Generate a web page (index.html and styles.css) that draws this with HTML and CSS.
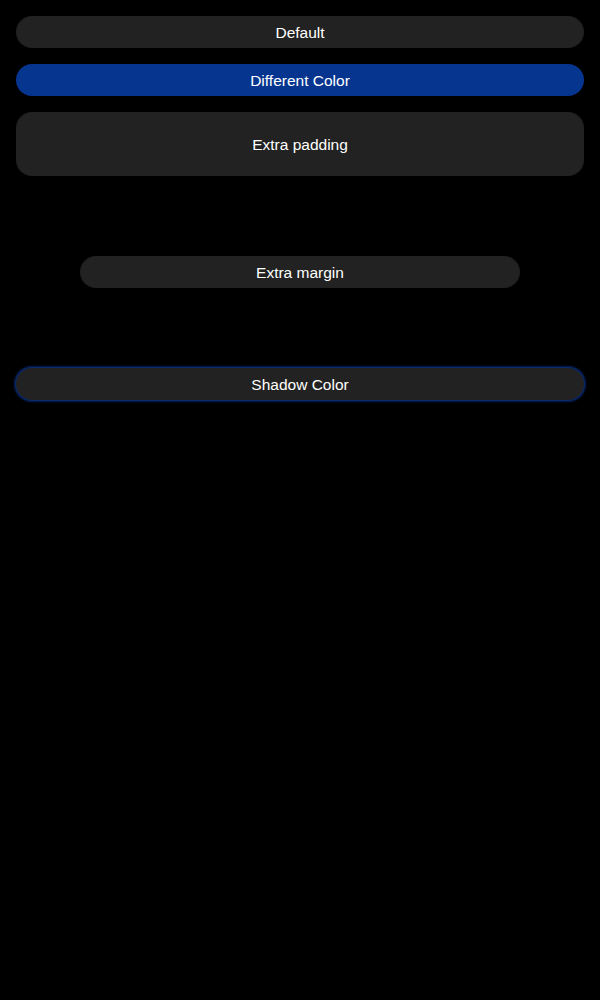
FILE: index.html
```html
<!DOCTYPE html>
<html>
<head>
<meta charset="utf-8">
<link rel="stylesheet" href="styles.css">
</head>
<body>
<div class="list">
  <button class="btn">Default</button>
  <button class="btn btn-blue">Different Color</button>
  <button class="btn btn-pad">Extra padding</button>
  <button class="btn btn-margin">Extra margin</button>
  <button class="btn btn-shadow">Shadow Color</button>
</div>
</body>
</html>
```
FILE: styles.css
```css
html, body {
  margin: 0;
  padding: 0;
  background: #000;
}
body {
  width: 600px;
  height: 1000px;
  font-family: "Liberation Sans", Arial, sans-serif;
}
.list {
  display: flex;
  flex-direction: column;
  gap: 16px;
  padding: 16px;
}
.btn {
  display: flex;
  align-items: center;
  justify-content: center;
  box-sizing: border-box;
  height: 32px;
  border: none;
  border-radius: 16px;
  background: #222222;
  color: #ffffff;
  font-family: "Liberation Sans", Arial, sans-serif;
  font-size: 15.5px;
  padding: 1px 16px 0;
  margin: 0;
}
.btn-blue {
  background: #063590;
}
.btn-pad {
  height: 64px;
}
.btn-margin {
  margin: 64px;
}
.btn-shadow {
  box-shadow: 0 0 0 1px #0a2a6e, 0 0 2px 2px #071e55;
}
```
